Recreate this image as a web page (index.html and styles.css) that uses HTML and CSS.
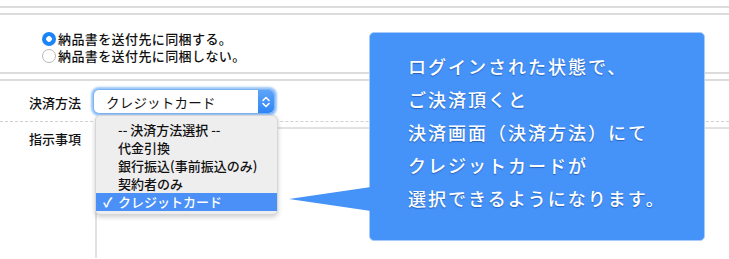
FILE: index.html
```html
<!DOCTYPE html>
<html lang="ja">
<head>
<meta charset="utf-8">
<link rel="stylesheet" href="styles.css">
</head>
<body>
<div class="page">
  <div class="rule"></div>
  <div class="section radios">
    <label class="radio-row"><span class="radio checked"></span>納品書を送付先に同梱する。</label>
    <label class="radio-row"><span class="radio"></span>納品書を送付先に同梱しない。</label>
  </div>
  <div class="row pay">
    <div class="label">決済方法</div>
    <div class="select">
      <span class="select-text">クレジットカード</span>
      <span class="select-btn">
        <svg width="10" height="14" viewBox="0 0 10 14"><path d="M2 5.5 L5 2.5 L8 5.5 M2 8.5 L5 11.5 L8 8.5" fill="none" stroke="#fff" stroke-width="1.6" stroke-linecap="round" stroke-linejoin="round"/></svg>
      </span>
    </div>
  </div>
  <div class="row notes">
    <div class="label">指示事項</div>
    <div class="notes-body"></div>
  </div>

  <ul class="menu">
    <li class="item">-- 決済方法選択 --</li>
    <li class="item">代金引換</li>
    <li class="item">銀行振込(事前振込のみ)</li>
    <li class="item">契約者のみ</li>
    <li class="item active"><span class="check">✓</span>クレジットカード</li>
  </ul>

  <div class="tip">
    <svg class="tip-arrow" width="82" height="24" viewBox="0 0 82 24"><polygon points="0,12 82,0 82,24" fill="#4592f8"/></svg>
    <p>ログインされた状態で、<br>ご決済頂くと<br>決済画面（決済方法）にて<br>クレジットカードが<br>選択できるようになります。</p>
  </div>
</div>
</body>
</html>
```

FILE: styles.css
```css
* { box-sizing: border-box; }
html, body { margin: 0; padding: 0; background: #fff; }
body {
  font-family: "Hiragino Kaku Gothic ProN", "Noto Sans CJK JP", "Noto Sans", sans-serif;
  color: #111;
  width: 729px;
  height: 259px;
  overflow: hidden;
}
.page { position: relative; width: 729px; height: 259px; padding-top: 6px; }
.rule { height: 2px; background: #dcdcdc; margin-bottom: 5px; }
.section.radios {
  border-top: 2px solid #dcdcdc;
  border-bottom: 2px solid #dcdcdc;
  height: 61px;
  padding: 15px 0 0 42px;
  margin-bottom: 5px;
}
.radio-row {
  display: flex;
  align-items: center;
  gap: 2px;
  height: 17px;
  font-size: 13px;
  line-height: 17px;
  letter-spacing: 0.4px;
  font-weight: 500;
}
.radio {
  width: 14px;
  height: 14px;
  border-radius: 50%;
  border: 1px solid #b8b8b8;
  background: #fff;
  flex: none;
}
.radio.checked {
  border: none;
  background: radial-gradient(circle, #fff 0 2.5px, #1b84f7 3.1px);
}
.row { display: flex; }
.row .label {
  width: 95px;
  padding-left: 29px;
  font-size: 13px;
  font-weight: 500;
}
.row.pay {
  border-top: 2px solid #dcdcdc;
  height: 43px;
  align-items: center;
  border-bottom: 1px dashed #d0d0d0;
}
.row.pay .label { padding-top: 2px; }
.select {
  width: 180px;
  height: 23px;
  margin-left: -1px;
  margin-top: 1px;
  border-radius: 5px;
  background: #fff;
  box-shadow: 0 0 0 1px #7db4f6, 0 0 2px 3px #9cc6f8;
  display: flex;
  align-items: center;
  overflow: hidden;
}
.select-text {
  flex: 1;
  padding-left: 12px;
  font-size: 13.5px;
  letter-spacing: 0.2px;
  color: #111;
}
.select-btn {
  width: 16px;
  height: 100%;
  background: linear-gradient(#5ea4fa, #2f85f5);
  display: flex;
  align-items: center;
  justify-content: center;
}
.row.notes { height: 136px; }
.row.notes .label { padding-top: 7px; }
.notes-body {
  flex: 1;
  margin-top: 5px;
  border-top: 2px solid #e2e2e2;
  border-left: 2px solid #e2e2e2;
}
.menu {
  position: absolute;
  left: 95px;
  top: 115px;
  width: 183px;
  margin: 0;
  padding: 5px 0 3px;
  list-style: none;
  background: #efeeef;
  border: 1px solid #d6d6d6;
  border-radius: 5px;
  box-shadow: 0 2px 5px rgba(0,0,0,0.2);
}
.item {
  height: 18px;
  line-height: 18px;
  padding-left: 22px;
  font-size: 13px;
  font-weight: 500;
  color: #111;
  position: relative;
}
.item.active {
  background: #4a90f6;
  color: #fff;
}
.check {
  position: absolute;
  left: 7px;
  top: 0;
  font-weight: 700;
}
.tip {
  position: absolute;
  left: 369px;
  top: 32px;
  width: 336px;
  height: 209px;
  background: #4592f8;
  border: 1px solid #a9cbf9;
  border-radius: 5px;
  padding: 17px 0 0 38px;
}
.tip-arrow {
  position: absolute;
  left: -81px;
  top: 154px;
}
.tip p {
  margin: 0;
  color: #fff;
  font-size: 18px;
  line-height: 33px;
  letter-spacing: 2px;
  font-weight: 500;
  text-shadow: 0 1px 1px rgba(0,40,110,0.45);
}
```
